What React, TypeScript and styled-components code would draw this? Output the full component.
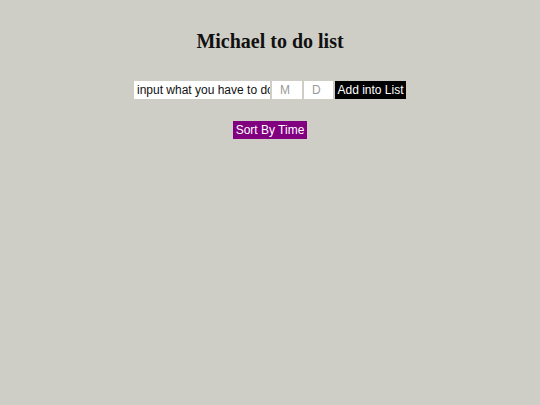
import React, { useState } from "react";
import { createGlobalStyle, styled } from "styled-components";

const GlobalStyle = createGlobalStyle`
  html, body {
    margin: 0;
    padding: 0;
    background-color: #cecec6;
  }
  body {
    min-height: 405px;
    font-family: "Liberation Serif", "Times New Roman", serif;
  }
`;

const App: React.FC = () => {
  const [task, setTask] = useState("input what you have to do");
  const [month, setMonth] = useState("");
  const [day, setDay] = useState("");

  return (
    <>
      <GlobalStyle />
      <StyledPage>
        <StyledTitle>Michael to do list</StyledTitle>
        <StyledForm onSubmit={(e) => e.preventDefault()}>
          <StyledInput
            $width={136}
            value={task}
            onChange={(e) => setTask(e.target.value)}
          />
          <StyledInput
            $width={30}
            $center
            placeholder='M'
            value={month}
            onChange={(e) => setMonth(e.target.value)}
          />
          <StyledInput
            $width={29}
            $center
            placeholder='D'
            value={day}
            onChange={(e) => setDay(e.target.value)}
          />
          <StyledButton type='submit' $bg='#000000'>
            Add into List
          </StyledButton>
        </StyledForm>
        <StyledButton type='button' $bg='#800080'>
          Sort By Time
        </StyledButton>
      </StyledPage>
    </>
  );
};

export default App;

const StyledPage = styled.div`
  display: flex;
  flex-direction: column;
  align-items: center;
  padding-top: 28px;
`;

const StyledTitle = styled.h1`
  margin: 0 0 27px;
  font-family: "Liberation Serif", "Times New Roman", serif;
  font-size: 20px;
  font-weight: bold;
  color: #111111;
  line-height: 26px;
`;

const StyledForm = styled.form`
  display: flex;
  gap: 2px;
  margin-bottom: 22px;
`;

const StyledInput = styled.input<{ $width: number; $center?: boolean }>`
  box-sizing: border-box;
  width: ${(p) => p.$width}px;
  height: 18px;
  border: none;
  outline: none;
  padding: 0 0 0 ${(p) => (p.$center ? "8px" : "3px")};
  background: #ffffff;
  font-family: "Liberation Sans", Arial, sans-serif;
  font-size: 12px;
  color: #111111;
  &::placeholder {
    color: #9a9a9a;
  }
`;

const StyledButton = styled.button<{ $bg: string }>`
  box-sizing: border-box;
  height: 18px;
  border: none;
  padding: 0 2.5px;
  background: ${(p) => p.$bg};
  color: #ffffff;
  font-family: "Liberation Sans", Arial, sans-serif;
  font-size: 12px;
  line-height: 18px;
  cursor: pointer;
`;
